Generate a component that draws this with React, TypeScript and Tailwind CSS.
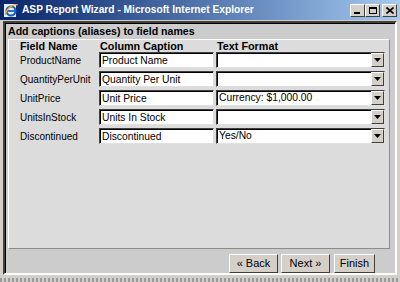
import React from 'react';

const rows = [
  { field: 'ProductName', caption: 'Product Name', format: '' },
  { field: 'QuantityPerUnit', caption: 'Quantity Per Unit', format: '' },
  { field: 'UnitPrice', caption: 'Unit Price', format: 'Currency: $1,000.00' },
  { field: 'UnitsInStock', caption: 'Units In Stock', format: '' },
  { field: 'Discontinued', caption: 'Discontinued', format: 'Yes/No' },
];

function TitleButton({ kind }: { kind: 'min' | 'max' | 'close' }) {
  return (
    <div className="w-[15px] h-[13px] bg-[#d4d0c8] border border-t-white border-l-white border-r-[#404040] border-b-[#404040] flex items-center justify-center">
      {kind === 'min' && <div className="w-[6px] h-[2px] bg-black mt-[6px] -ml-[2px]" />}
      {kind === 'max' && <div className="w-[8px] h-[7px] border border-black border-t-2" />}
      {kind === 'close' && (
        <svg width="8" height="7" viewBox="0 0 8 7">
          <path d="M0.5 0.5 L7.5 6.5 M7.5 0.5 L0.5 6.5" stroke="black" strokeWidth="1.6" />
        </svg>
      )}
    </div>
  );
}

function IeIcon() {
  return (
    <svg width="16" height="16" viewBox="0 0 16 16">
      <rect x="1" y="2" width="12" height="13" fill="#e8eef8" />
      <circle cx="8" cy="9" r="4.5" fill="none" stroke="#1a5fc8" strokeWidth="2.2" />
      <path d="M4 9 H12" stroke="#1a5fc8" strokeWidth="1.8" />
      <path d="M2 13 C 5 3, 13 2, 15 3" fill="none" stroke="#f0b020" strokeWidth="1.2" />
    </svg>
  );
}

function TextBox({ value }: { value: string }) {
  return (
    <div className="w-[115px] h-[16px] bg-white border border-t-[#404040] border-l-[#404040] border-r-[#e0e0e0] border-b-[#e0e0e0] shadow-[inset_1px_1px_0_#000] pl-[2px] text-[10.3px] leading-[15px] text-black overflow-hidden whitespace-nowrap">
      {value}
    </div>
  );
}

function Select({ value }: { value: string }) {
  return (
    <div className="w-[169px] h-[16px] bg-white border border-t-[#404040] border-l-[#404040] border-r-[#e0e0e0] border-b-[#e0e0e0] shadow-[inset_1px_1px_0_#000] flex items-center">
      <span className="flex-1 pl-[2px] text-[10.3px] leading-[14px] text-black whitespace-nowrap">{value}</span>
      <div className="w-[13px] h-[14px] bg-[#d4d0c8] border border-t-white border-l-white border-r-[#404040] border-b-[#404040] flex items-center justify-center">
        <svg width="7" height="4" viewBox="0 0 7 4">
          <path d="M0 0 H7 L3.5 4 Z" fill="black" />
        </svg>
      </div>
    </div>
  );
}

function PushButton({ label, w }: { label: string; w: string }) {
  return (
    <div
      className={`${w} h-[19px] bg-[#d4d0c8] border border-t-white border-l-white border-r-[#404040] border-b-[#404040] flex items-center justify-center text-[11px] text-black`}
    >
      {label}
    </div>
  );
}

export default function App() {
  return (
    <div className="w-[400px] h-[282px] bg-[#cccccc] overflow-hidden font-['Liberation_Sans',Arial,sans-serif] flex flex-col">
      {/* Title bar */}
      <div className="h-[20px] shrink-0 bg-gradient-to-r from-[#0a246a] to-[#a6caf0] flex items-center pl-[3px] pr-[3px]">
        <IeIcon />
        <span className="ml-[3px] text-white font-bold text-[10.2px] whitespace-nowrap">
          ASP Report Wizard - Microsoft Internet Explorer
        </span>
        <div className="ml-auto flex items-center">
          <TitleButton kind="min" />
          <TitleButton kind="max" />
          <div className="w-[2px]" />
          <TitleButton kind="close" />
        </div>
      </div>

      {/* Window body */}
      <div className="flex-1 flex flex-col bg-[#d4d0c8] px-[3px] pb-[3px] pt-[1px]">
        <div className="flex-1 flex flex-col bg-[#cccccc] border-2 border-t-[#404040] border-l-[#404040] border-r-white border-b-white shadow-[inset_1px_1px_0_#000] pl-[3px] pr-[5px]">
          <div className="h-[16px] pt-[1px] text-[10.6px] font-bold text-black leading-[15px] whitespace-nowrap">
            Add captions (aliases) to field names
          </div>
          <div className="h-[210px] bg-[#dcdcdc] border border-t-white border-l-white border-r-[#8c8c8c] border-b-[#8c8c8c] pl-[11px] pt-[1px]">
            <div className="flex h-[11px] text-[10.8px] font-bold leading-[11px] text-black">
              <span className="w-[80px]">Field Name</span>
              <span className="w-[117px]">Column Caption</span>
              <span>Text Format</span>
            </div>
            <div className="flex flex-col gap-[3px]">
              {rows.map((r) => (
                <div key={r.field} className="flex items-center h-[16px]">
                  <span className="w-[79px] text-[10px] text-black whitespace-nowrap">{r.field}</span>
                  <TextBox value={r.caption} />
                  <div className="w-[2px]" />
                  <Select value={r.format} />
                </div>
              ))}
            </div>
          </div>
          <div className="flex justify-end pt-[5px] pr-[15px]">
            <PushButton label="« Back" w="w-[49px]" />
            <div className="w-[3px]" />
            <PushButton label="Next »" w="w-[49px]" />
            <div className="w-[4px]" />
            <PushButton label="Finish" w="w-[41px]" />
          </div>
        </div>
      </div>
      <div className="h-[4px] shrink-0 bg-[repeating-linear-gradient(90deg,#9a9a9a_0_2px,#cfcfcf_2px_4px)]" />
    </div>
  );
}
